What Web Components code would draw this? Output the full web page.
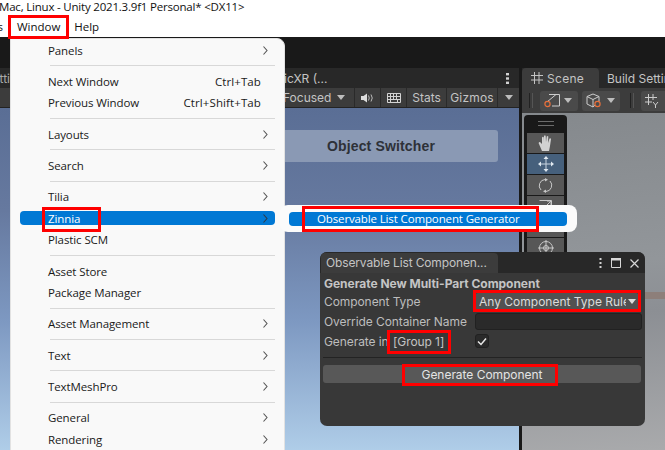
<!DOCTYPE html>
<html>
<head>
<meta charset="utf-8">
<style>
  html, body { margin: 0; padding: 0; width: 665px; height: 450px; overflow: hidden; background: #191919; }
  body { position: relative; font-family: "Open Sans", "Noto Sans", sans-serif; }
</style>
</head>
<body>
<editor-shell></editor-shell>

<window-menu>
  <menu-item label="Panels" arrow></menu-item>
  <menu-sep></menu-sep>
  <menu-item label="Next Window" shortcut="Ctrl+Tab"></menu-item>
  <menu-item label="Previous Window" shortcut="Ctrl+Shift+Tab"></menu-item>
  <menu-sep></menu-sep>
  <menu-item label="Layouts" arrow></menu-item>
  <menu-sep></menu-sep>
  <menu-item label="Search" arrow></menu-item>
  <menu-sep></menu-sep>
  <menu-item label="Tilia" arrow></menu-item>
  <menu-item label="Zinnia" arrow active></menu-item>
  <menu-item label="Plastic SCM"></menu-item>
  <menu-sep></menu-sep>
  <menu-item label="Asset Store"></menu-item>
  <menu-item label="Package Manager"></menu-item>
  <menu-sep></menu-sep>
  <menu-item label="Asset Management" arrow></menu-item>
  <menu-sep></menu-sep>
  <menu-item label="Text" arrow></menu-item>
  <menu-sep></menu-sep>
  <menu-item label="TextMeshPro" arrow></menu-item>
  <menu-sep></menu-sep>
  <menu-item label="General" arrow></menu-item>
  <menu-item label="Rendering" arrow></menu-item>
</window-menu>

<sub-menu></sub-menu>
<generator-window></generator-window>

<red-box style="left:8px;top:15px;width:61px;height:24px"></red-box>
<red-box style="left:42px;top:207px;width:59px;height:25px"></red-box>
<red-box style="left:302px;top:206px;width:237px;height:26px"></red-box>
<red-box style="left:473px;top:290px;width:168px;height:22px"></red-box>
<red-box style="left:387px;top:330px;width:64px;height:24px"></red-box>
<red-box style="left:402px;top:364px;width:156px;height:22px"></red-box>

<script>
// top of the editor: title, menu bar, then the two docked panels
class EditorShell extends HTMLElement {
  constructor() {
    super();
    this.shadow = this.attachShadow({ mode: "open" });
    this.shadow.innerHTML = `<style>
      :host { display: flex; flex-direction: column; width: 665px; height: 450px; overflow: hidden; }
      .title { height: 16px; flex: none; background: #fff; color: #111; font: 11.5px/13px "Open Sans", sans-serif; white-space: nowrap; letter-spacing: -.2px; overflow: hidden; }
      .title span { display: block; margin-left: -1px; }
      .bar { height: 21px; flex: none; background: #fff; color: #111; font: 11.5px/21px "Open Sans", sans-serif; display: flex; letter-spacing: -.02px; overflow: hidden; }
      .bar span { margin-left: 14px; }
      .bar span:first-child { margin-left: 0; width: 3px; overflow: hidden; direction: rtl; }
      .strip { height: 31px; background: #191919; flex: none; }
      .docks { flex: 1; display: flex; gap: 3px; background: #191919; min-height: 0; }
    </style>
    <div class="title"><span>Mac, Linux - Unity 2021.3.9f1 Personal* &lt;DX11&gt;</span></div>
    <div class="bar"><span>s</span><span>Window</span><span>Help</span></div>
    <div class="strip"></div>
    <div class="docks"><game-panel></game-panel><scene-panel></scene-panel></div>`;
  }
}
customElements.define("editor-shell", EditorShell);

class GamePanel extends HTMLElement {
  constructor() {
    super();
    this.shadow = this.attachShadow({ mode: "open" });
    this.shadow.innerHTML = `<style>
      :host { display: flex; flex-direction: column; width: 519px; flex: none; font: 12px "Inter", sans-serif; color: #c4c4c4; }
      .tabs { height: 20px; background: #282828; display: flex; align-items: center; flex: none; }
      .tabs .left { width: 10px; overflow: hidden; white-space: nowrap; color: #aaa; direction: rtl; }
      .tabs .name { margin-left: 274px; white-space: nowrap; }
      .tabs svg { margin-left: auto; margin-right: 10px; }
      .tools { height: 19px; flex: none; background: #3c3c3c; border-bottom: 1px solid #232323; display: flex; align-items: center; }
      .tools .focused { margin-left: 283px; width: 64px; overflow: hidden; white-space: nowrap; }
      .tools .cell { height: 19px; display: flex; align-items: center; border-left: 1px solid #2a2a2a; justify-content: center; flex: none; }
      .caret { width: 0; height: 0; border: 4px solid transparent; border-top: 5px solid #bdbdbd; border-bottom: 0; flex: none; }
      .view { flex: 1; background: linear-gradient(180deg, #5a6e95 0%, #66799f 30%, #7d98c1 62%, #afcde8 100%); padding-top: 22px; }
      .object { margin-left: 200px; width: 298px; height: 32px; box-sizing: border-box; padding-left: 64px; background: #8a99b4; border-radius: 3px; display: flex; align-items: center; justify-content: center; font: bold 14px "Liberation Sans", sans-serif; letter-spacing: .15px; color: #2e3138; }
    </style>
    <div class="tabs"><span class="left">Build Setti</span><span class="name">icXR (...</span>
      <svg width="3" height="11" viewBox="0 0 3 11"><g fill="#d2d2d2"><rect y="0" width="3" height="2.4"/><rect y="4.3" width="3" height="2.4"/><rect y="8.6" width="3" height="2.4"/></g></svg>
    </div>
    <div class="tools">
      <span class="focused">Focused</span>
      <span class="caret" style="margin-left:0"></span>
      <span class="cell" style="width:25px;margin-left:9px">
        <svg width="14" height="10" viewBox="0 0 14 10"><path d="M0 3h2.500L6 .5v9L2.500 7H0z" fill="#ddd"/><path d="M7.500 2.500q1.500 2.500 0 5M10 1.500q2.500 3.500 0 7" stroke="#bbb" fill="none"/></svg>
      </span>
      <span class="cell" style="width:25px">
        <svg width="14" height="10" viewBox="0 0 14 10"><path d="M.5.5h13v9H.5zM.5 3.500h13M.5 6.500h13M3.500.5v6M6.500.5v6M9.500.5v6M3.500 6.500v3M10.500 6.500v3" fill="none" stroke="#d4d4d4"/></svg>
      </span>
      <span class="cell" style="width:39px">Stats</span>
      <span class="cell" style="width:50px;letter-spacing:.2px">Gizmos</span>
      <span class="cell" style="width:21px"><span class="caret"></span></span>
    </div>
    <div class="view"><div class="object">Object Switcher</div></div>`;
  }
}
customElements.define("game-panel", GamePanel);

class ScenePanel extends HTMLElement {
  constructor() {
    super();
    this.shadow = this.attachShadow({ mode: "open" });
    this.shadow.innerHTML = `<style>
      :host { display: flex; flex-direction: column; flex: 1; min-width: 0; font: 12px "Inter", sans-serif; color: #c4c4c4; overflow: hidden; }
      .tabs { height: 20px; background: #282828; display: flex; flex: none; }
      .tab { display: flex; align-items: center; white-space: nowrap; flex: none; }
      .tab.on { width: 77px; background: #3c3c3c; box-sizing: border-box; padding-left: 9px; gap: 4px; border-radius: 4px 4px 0 0; letter-spacing: .3px; }
      .tab.off { margin-left: 8px; }
      .tools { height: 25px; background: #3c3c3c; display: flex; align-items: center; flex: none; padding-left: 7px; }
      .grip { height: 15px; border-left: 1px solid #222; border-right: 1px solid #555; flex: none; width: 2px; }
      .drop { width: 38px; height: 20px; background: #4a4a4a; border-radius: 3px; display: flex; align-items: center; gap: 4px; padding-left: 4px; box-sizing: border-box; flex: none; }
      .caret { width: 0; height: 0; border: 4px solid transparent; border-top: 5px solid #bdbdbd; border-bottom: 0; flex: none; }
      .view { flex: 1; background: linear-gradient(175deg, #85898d 0%, #92969a 45%, #8c8f94 60%, #a9aaac 100%); position: relative; padding: 2px 0 0 2px; }
      .stripe { position: absolute; right: 0; top: 179px; width: 25px; height: 7px; background: #8d7f7a; }
      .overlay { width: 43px; height: 142px; background: #191919; border-radius: 4px 4px 0 0; display: flex; flex-direction: column; align-items: center; gap: 1px; }
      .handle { height: 17px; width: 16px; display: flex; flex-direction: column; justify-content: center; gap: 3px; flex: none; }
      .handle i { display: block; height: 1px; background: #6b6b6b; }
      .btn { width: 37px; height: 20px; background: #575757; display: flex; align-items: center; justify-content: center; flex: none; }
      .btn.on { background: #46607c; }
    </style>
    <div class="tabs">
      <div class="tab on">
        <svg width="12" height="12" viewBox="0 0 12 12"><path d="M3.500 0v12M8 0v12M0 3.500h12M0 8h12" stroke="#c4c4c4" fill="none"/></svg>Scene
      </div>
      <div class="tab off">Build Settings</div>
    </div>
    <div class="tools">
      <span class="grip"></span>
      <span class="drop" style="margin-left:7px">
        <svg width="16" height="15" viewBox="0 0 16 15"><path d="M3 9L12 1.500M5 1.500h10.500V13H8" stroke="#ccc" fill="none"/><circle cx="3.500" cy="11" r="2.600" fill="none" stroke="#e8703c" stroke-width="1.200"/></svg>
        <span class="caret"></span>
      </span>
      <span class="drop" style="margin-left:4px">
        <svg width="17" height="15" viewBox="0 0 17 15"><path d="M7 1l6 2.500v5L7 14 1 11V3.500zM1 3.500L7 6.500l6-3M7 6.500V14" stroke="#ccc" fill="none"/><circle cx="11.500" cy="11" r="2.600" fill="#4a4a4a" stroke="#e8703c" stroke-width="1.200"/></svg>
        <span class="caret"></span>
      </span>
      <span class="grip" style="margin-left:10px"></span>
      <span class="drop" style="margin-left:7px;width:40px">
        <svg width="14" height="14" viewBox="0 0 14 14"><path d="M3.500 0v11M8 0v6M0 3.500h12M0 8h7M8 8l2.500 3 2.500-3M10.500 11v3" stroke="#ccc" fill="none"/></svg>
      </span>
    </div>
    <div class="view">
      <div class="stripe"></div>
      <div class="overlay">
        <div class="handle"><i></i><i></i></div>
        <div class="btn"><svg width="15" height="16" viewBox="0 0 15 16"><path d="M4 16L1 9q-1-2 1-2l2 2V2.500q1-1.500 1.700 0V7l.3-6q1-1.300 1.700 0L8 7l.7-5.500q1-1 1.600 0L10 8l1.500-4.500q1.500-.5 1.500.8L12 11l-1 5z" fill="#d2d2d2"/></svg></div>
        <div class="btn on"><svg width="16" height="16" viewBox="0 0 16 16"><path d="M8 2v12M2 8h12" stroke="#c8d4e0" fill="none"/><path d="M8 0l2.500 3h-5zM8 16l2.500-3h-5zM0 8l3-2.500v5zM16 8l-3-2.500v5z" fill="#dfe8f0"/></svg></div>
        <div class="btn"><svg width="15" height="15" viewBox="0 0 15 15"><path d="M3 12A6.200 6.200 0 0 1 7 1.500M12 3a6.200 6.200 0 0 1-4 10.500" stroke="#c8c8c8" fill="none"/><path d="M7 0l3 1.800-3 1.800zM8 15l-3-1.800 3-1.800z" fill="#c8c8c8"/></svg></div>
        <div class="btn"><svg width="13" height="13" viewBox="0 0 13 13"><path d="M.5.5h12v12M5 8l7-7M8 1h4v4" stroke="#c8c8c8" fill="none"/></svg></div>
        <div class="btn"></div>
        <div class="btn"><svg width="16" height="16" viewBox="0 0 16 16"><circle cx="8" cy="8" r="6.500" fill="none" stroke="#c8c8c8"/><path d="M8 0v16M0 8h16" stroke="#c8c8c8"/><circle cx="8" cy="8" r="2.500" fill="none" stroke="#c8c8c8"/></svg></div>
      </div>
    </div>`;
  }
}
customElements.define("scene-panel", ScenePanel);

// the big light popup
class WindowMenu extends HTMLElement {
  constructor() {
    super();
    this.shadow = this.attachShadow({ mode: "open" });
    this.shadow.innerHTML = `<style>
      :host { display: block; position: absolute; left: 10px; top: 38px; width: 275px; height: 430px; box-sizing: border-box; padding-top: .5px; background: #f9f9f9; border: 1px solid #e2e2e2; border-radius: 0 8px 8px 8px; }
    </style><slot></slot>`;
  }
}
customElements.define("window-menu", WindowMenu);

class MenuItem extends HTMLElement {
  constructor() {
    super();
    this.shadow = this.attachShadow({ mode: "open" });
  }
  connectedCallback() {
    var label = this.getAttribute("label");
    var shortcut = this.getAttribute("shortcut");
    var arrow = this.hasAttribute("arrow");
    this.shadow.innerHTML = `<style>
      :host { display: block; height: 21.5px; box-sizing: border-box; padding: 3.700px 9px 0 9px; font: 11.5px "Open Sans", sans-serif; color: #1a1a1a; letter-spacing: -.1px; }
      :host([active]) { color: #fff; }
      .row { height: 14px; border-radius: 4px; display: flex; align-items: center; padding: 0 7px 0 28px; white-space: nowrap; }
      :host([active]) .row { background: #0078d4; }
      .short { margin-left: auto; margin-right: 7px; letter-spacing: .1px; }
      svg { margin-left: auto; }
      :host([active]) path { stroke: #2b3a48; }
    </style><div class="row"><span>${label}</span>
      ${shortcut ? `<span class="short">${shortcut}</span>` : ""}
      ${arrow ? `<svg width="5" height="9" viewBox="0 0 5 9"><path d="M.5.5l3.500 4-3.500 4" fill="none" stroke="#555" stroke-width="1.100"/></svg>` : ""}
    </div>`;
  }
}
customElements.define("menu-item", MenuItem);

class MenuSep extends HTMLElement {
  constructor() {
    super();
    this.shadow = this.attachShadow({ mode: "open" });
    this.shadow.innerHTML = `<style>
      :host { display: block; height: 1px; margin: 4.400px 9px 4.400px 39px; background: #d8d8d8; }
    </style>`;
  }
}
customElements.define("menu-sep", MenuSep);

class SubMenu extends HTMLElement {
  constructor() {
    super();
    this.shadow = this.attachShadow({ mode: "open" });
    this.shadow.innerHTML = `<style>
      :host { display: flex; align-items: center; position: absolute; left: 280px; top: 205px; width: 297px; height: 27px; box-sizing: border-box; padding: 0 10px 0 9px; background: #fbfbfb; border-radius: 8px; font: 11.5px "Open Sans", sans-serif; color: #fff; letter-spacing: -.13px; }
      div { flex: 1; height: 14px; background: #0078d4; border-radius: 4px; display: flex; align-items: center; padding-left: 28px; white-space: nowrap; }
    </style><div>Observable List Component Generator</div>`;
  }
}
customElements.define("sub-menu", SubMenu);

class GeneratorWindow extends HTMLElement {
  constructor() {
    super();
    this.shadow = this.attachShadow({ mode: "open" });
    this.shadow.innerHTML = `<style>
      :host { display: flex; flex-direction: column; position: absolute; left: 320px; top: 252px; width: 325px; height: 174px; background: #383838; border-radius: 7px; overflow: hidden; font: 12px "Inter", sans-serif; color: #bdbdbd; }
      .head { height: 21px; background: #282828; display: flex; flex: none; padding: 1px 0 0 1px; box-sizing: border-box; }
      .tab { width: 177px; background: #3c3c3c; padding-left: 5px; box-sizing: border-box; line-height: 19px; color: #c4c4c4; border-radius: 4px 4px 0 0; white-space: nowrap; letter-spacing: -.14px; }
      .ctl { margin-left: auto; display: flex; align-items: center; gap: 9px; padding-right: 6px; }
      .body { padding: 1px 3px 0 4px; display: flex; flex-direction: column; }
      h1 { margin: 0; font: bold 12px/19px "Inter", sans-serif; color: #c4c4c4; height: 17px; letter-spacing: -.03px; }
      .row { display: grid; grid-template-columns: 151px 1fr; height: 20px; align-items: center; letter-spacing: -.08px; }
      .dd { height: 17px; margin-right: 3px; background: #515151; border-radius: 3px; display: flex; align-items: center; padding: 0 4px; color: #dcdcdc; white-space: nowrap; overflow: hidden; letter-spacing: 0; }
      .dd span { width: 147px; overflow: hidden; flex: none; line-height: 17px; }
      .caret { width: 0; height: 0; border: 4px solid transparent; border-top: 5px solid #dcdcdc; border-bottom: 0; flex: none; margin-left: 2px; }
      .inp { height: 17px; background: #2a2a2a; border: 1px solid #212121; box-sizing: border-box; border-radius: 3px; }
      .group { position: relative; }
      .group b { position: absolute; left: 65px; top: 50%; transform: translateY(-50%); background: #383838; font-weight: normal; padding: 0 3px 0 4px; color: #c4c4c4; white-space: nowrap; }
      .chk { width: 14px; height: 14px; background: #2a2a2a; border: 1px solid #212121; box-sizing: border-box; border-radius: 3px; display: flex; align-items: center; justify-content: center; }
      hr { border: 0; height: 1px; background: #232323; margin: 6px 0 7px -1px; }
      .btn { height: 18px; margin: 0 1px 0 -1px; background: #585858; border-radius: 3px; display: flex; align-items: center; justify-content: center; color: #e4e4e4; letter-spacing: -.03px; padding-top: 1px; box-sizing: border-box; }
    </style>
    <div class="head">
      <div class="tab">Observable List Componen...</div>
      <div class="ctl">
        <svg width="3" height="10" viewBox="0 0 3 10"><g fill="#d2d2d2"><rect x=".5" y="0" width="2" height="2"/><rect x=".5" y="4" width="2" height="2"/><rect x=".5" y="8" width="2" height="2"/></g></svg>
        <svg width="10" height="10" viewBox="0 0 10 10"><path d="M.5.5h9v9h-9z" fill="none" stroke="#d8d8d8"/><path d="M0 0h10v2.500H0z" fill="#d8d8d8"/></svg>
        <svg width="9" height="9" viewBox="0 0 9 9"><path d="M.5.500l8 8M8.500.500l-8 8" stroke="#d8d8d8" stroke-width="1.200"/></svg>
      </div>
    </div>
    <div class="body">
      <h1>Generate New Multi-Part Component</h1>
      <div class="row"><span>Component Type</span><div class="dd"><span>Any Component Type Rule</span><i class="caret"></i></div></div>
      <div class="row"><span>Override Container Name</span><div class="inp"></div></div>
      <div class="row"><span class="group">Generate in<b>[Group 1]</b></span><div class="chk"><svg width="10" height="9" viewBox="0 0 10 9"><path d="M1 4.500l3 3 5-6" fill="none" stroke="#e8e8e8" stroke-width="1.500"/></svg></div></div>
      <hr>
      <div class="btn">Generate Component</div>
    </div>`;
  }
}
customElements.define("generator-window", GeneratorWindow);

class RedBox extends HTMLElement {
  constructor() {
    super();
    this.shadow = this.attachShadow({ mode: "open" });
    this.shadow.innerHTML = `<style>
      :host { display: block; position: absolute; box-sizing: border-box; border: 3px solid #f00; pointer-events: none; }
    </style>`;
  }
}
customElements.define("red-box", RedBox);
</script>
</body>
</html>
